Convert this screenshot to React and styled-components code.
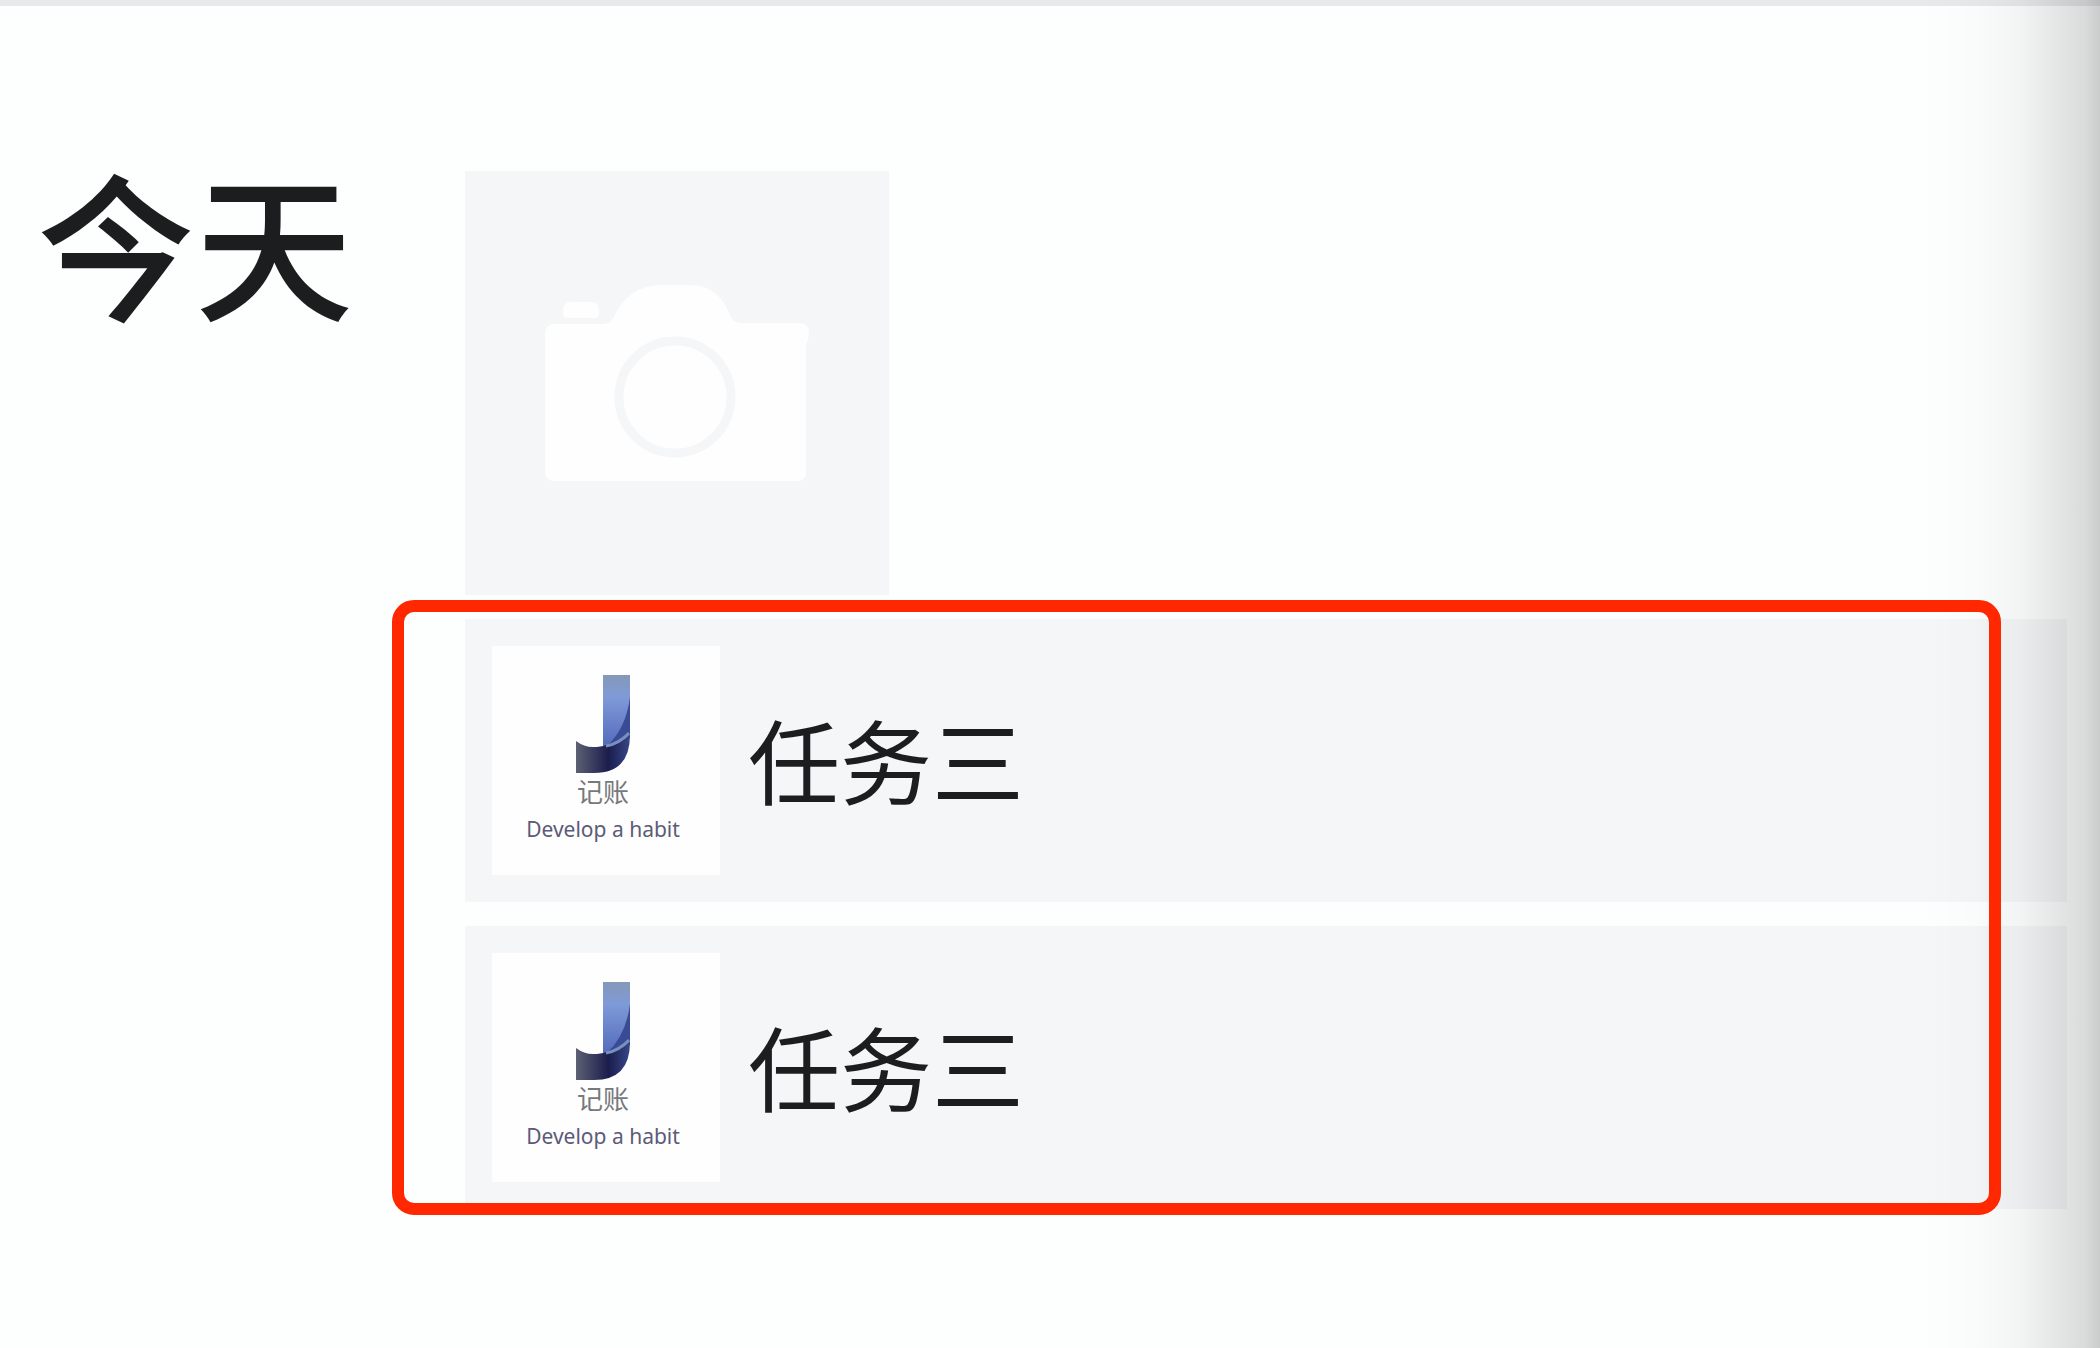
import { useId } from 'react';
import styled, { createGlobalStyle } from 'styled-components';

const GlobalStyle = createGlobalStyle`
  * {
    box-sizing: border-box;
  }

  body {
    margin: 0;
    background: #fdfefe;
    color: #1c1d1f;
    font-family: "Noto Sans CJK SC", "Noto Sans", sans-serif;
  }
`;

const Page = styled.div`
  position: relative;
  min-height: 100vh;
  border-top: 6px solid #e8e9eb;
`;

const EdgeShade = styled.div`
  position: absolute;
  top: -6px;
  right: 0;
  bottom: 0;
  width: 180px;
  pointer-events: none;
  background: linear-gradient(
    to right,
    rgba(0, 0, 0, 0) 0%,
    rgba(0, 0, 0, 0.01) 30%,
    rgba(0, 0, 0, 0.04) 55%,
    rgba(0, 0, 0, 0.1) 78%,
    rgba(0, 0, 0, 0.14) 92%,
    rgba(0, 0, 0, 0.2) 100%
  );
`;

const Day = styled.section`
  display: grid;
  grid-template-columns: 428px 1fr;
  padding: 165px 33px 48px 37px;
`;

const DayTitle = styled.h1`
  margin: 0;
  font-size: 158px;
  font-weight: 500;
  line-height: 140px;
`;

const DayContent = styled.div`
  display: flex;
  flex-direction: column;
  align-items: flex-start;
  gap: 24px;
`;

const PhotoButton = styled.button`
  display: flex;
  align-items: center;
  justify-content: center;
  width: 424px;
  height: 424px;
  padding: 0;
  border: 0;
  background: #f5f6f8;
`;

const TaskList = styled.ul`
  position: relative;
  display: flex;
  flex-direction: column;
  align-self: stretch;
  gap: 24px;
  margin: 0;
  padding: 0;
  list-style: none;
`;

const Highlight = styled.li`
  position: absolute;
  top: -19px;
  right: 66px;
  bottom: -6px;
  left: -73px;
  border: 12px solid #ff2800;
  border-radius: 22px;
  pointer-events: none;
  z-index: 1;
`;

const TaskRow = styled.li`
  display: flex;
  align-items: center;
  gap: 28px;
  padding: 27px;
  background: #f5f6f8;
`;

const Thumb = styled.div`
  display: flex;
  flex-direction: column;
  align-items: center;
  width: 228px;
  height: 229px;
  padding: 29px 6px 0 0;
  background: #fefefe;
`;

const ThumbName = styled.span`
  margin-top: 2px;
  color: #77787c;
  font-size: 26px;
  line-height: 32px;
`;

const ThumbSlogan = styled.span`
  margin-top: 8px;
  color: #5c5a78;
  font-family: "Noto Sans", sans-serif;
  font-size: 21px;
  line-height: 28px;
  white-space: nowrap;
`;

const TaskName = styled.span`
  padding-bottom: 6px;
  font-size: 92px;
  line-height: 120px;
`;

const tasks = [
  { id: 1, name: '任务三' },
  { id: 2, name: '任务三' },
];

const CameraIcon = () => (
  <svg width="264" height="196" viewBox="0 0 264 196" aria-hidden="true">
    <path
      fill="#fefefe"
      d="M18 25q0-8 8-8h20q8 0 8 8v3q0 5-5 5H23q-5 0-5-5zM10 39h48q8 0 11-7C78 12 94 0 116 0h28c22 0 34 12 41 30q3 8 11 8h58q10 0 10 9 0 7-3 12v128q0 9-9 9H9q-9 0-9-9V49q0-10 10-10z"
    />
    <circle cx="130" cy="112" r="56" fill="none" stroke="#f5f6f8" strokeWidth="9" />
  </svg>
);

const Logo = () => {
  const id = useId();
  return (
    <svg width="54" height="98" viewBox="0 0 54 98" aria-hidden="true">
      <defs>
        <linearGradient id={`${id}-stem`} x1="0" y1="0" x2="0" y2="1">
          <stop offset="0" stopColor="#8598b8" />
          <stop offset="0.3" stopColor="#7f9ad8" />
          <stop offset="1" stopColor="#5168bb" />
        </linearGradient>
        <linearGradient id={`${id}-hook`} x1="0" y1="0" x2="1" y2="0">
          <stop offset="0" stopColor="#5d6073" />
          <stop offset="0.6" stopColor="#1b1d4c" />
          <stop offset="1" stopColor="#37478a" />
        </linearGradient>
      </defs>
      <path fill={`url(#${id}-stem)`} d="M27 0h27v62L27 74z" />
      <path fill="#384b94" d="M54 22v41L30 72Q50 54 54 22z" />
      <path
        fill={`url(#${id}-hook)`}
        d="M0 66q8 6 17 6 8 0 13-2l24-10q0 38-36 38H0z"
      />
      <path fill="none" stroke="#7890bd" strokeWidth="3" d="M30 71q14-3 23-13" />
    </svg>
  );
};

const Task = ({ name }) => (
  <TaskRow>
    <Thumb>
      <Logo />
      <ThumbName>记账</ThumbName>
      <ThumbSlogan>Develop a habit</ThumbSlogan>
    </Thumb>
    <TaskName>{name}</TaskName>
  </TaskRow>
);

const App = () => {
  return (
    <>
      <GlobalStyle />
      <Page>
        <Day>
          <DayTitle>今天</DayTitle>
          <DayContent>
            <PhotoButton type="button" aria-label="拍照">
              <CameraIcon />
            </PhotoButton>
            <TaskList>
              {tasks.map((task) => (
                <Task key={task.id} name={task.name} />
              ))}
              <Highlight aria-hidden="true" />
            </TaskList>
          </DayContent>
        </Day>
        <EdgeShade />
      </Page>
    </>
  );
};

export default App;
